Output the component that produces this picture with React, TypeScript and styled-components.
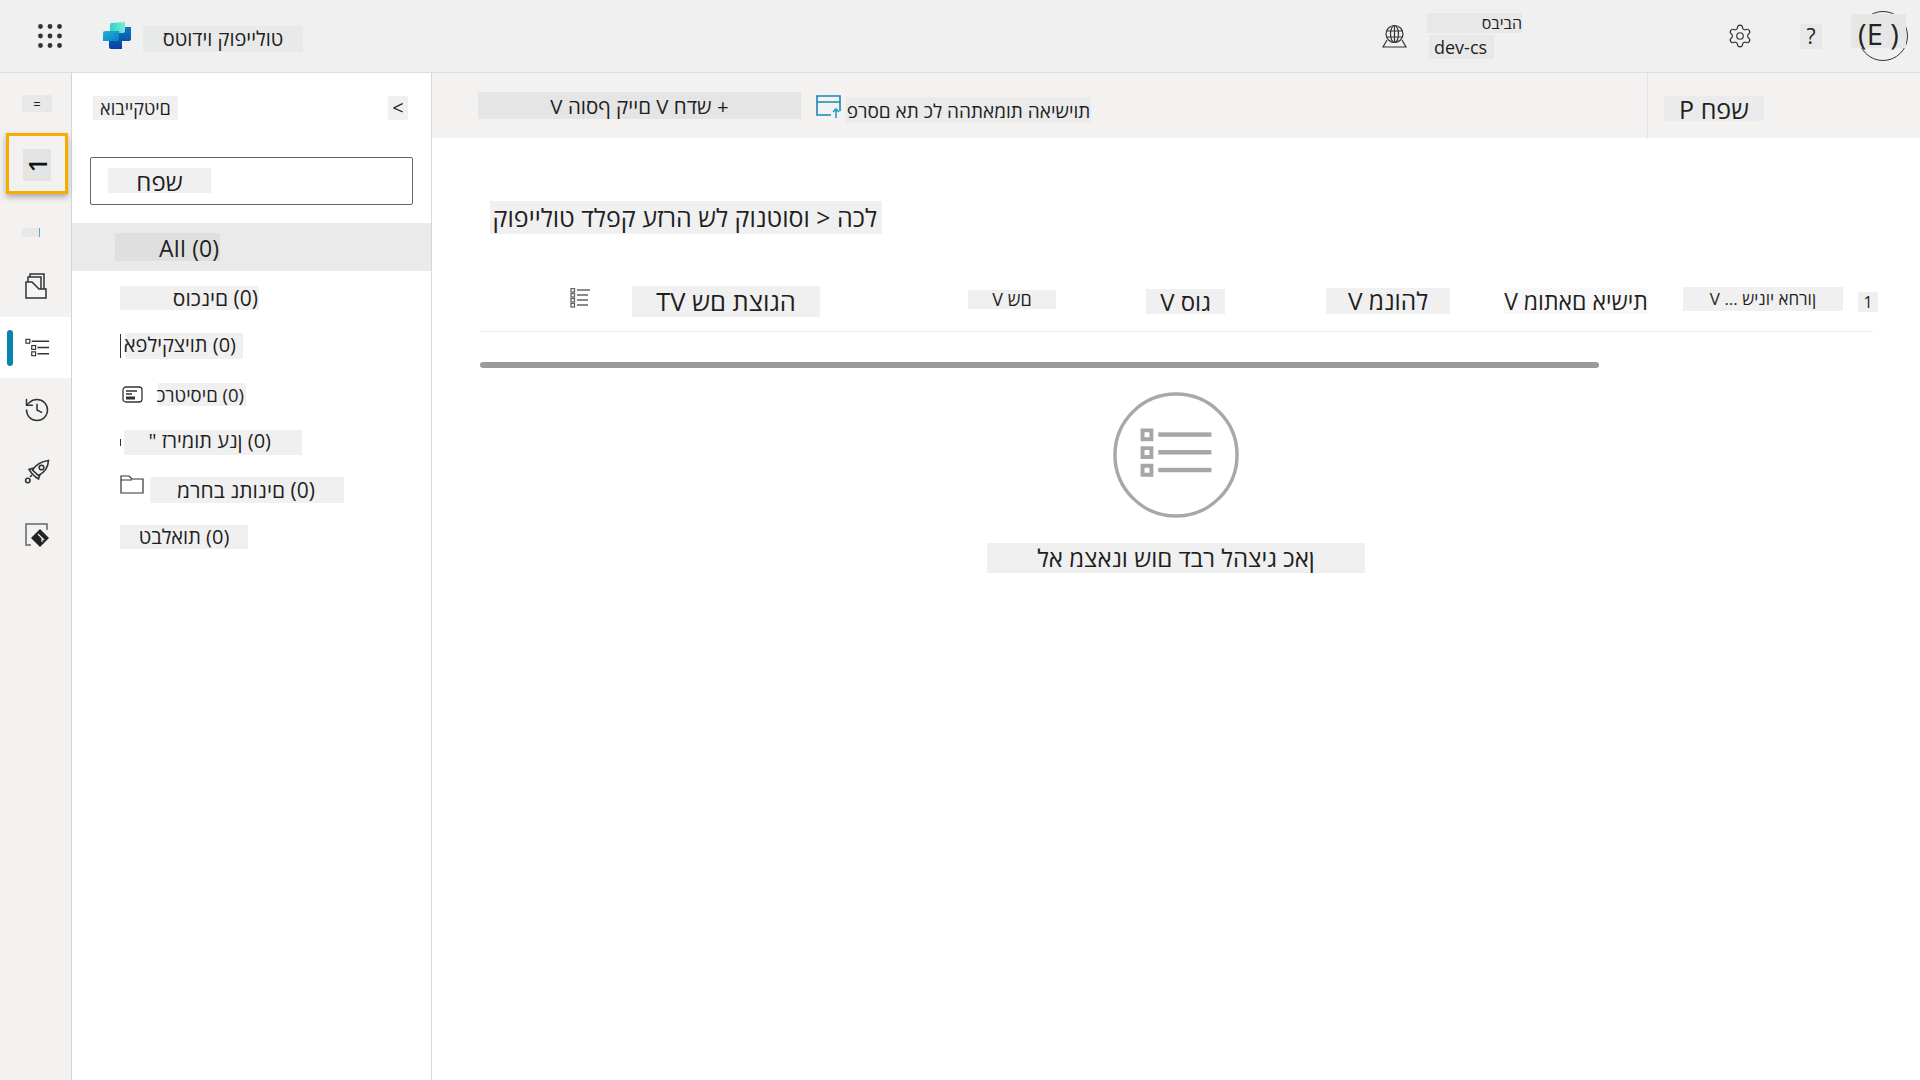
// App.tsx
import React from 'react';
import styled, { createGlobalStyle } from 'styled-components';
import { History, Settings } from 'lucide-react';

const GlobalStyle = createGlobalStyle`
  html, body {
    margin: 0;
    padding: 0;
    background: #fff;
  }
  body {
    font-family: "Open Sans", "Noto Sans", "Liberation Sans", sans-serif;
    color: #242424;
  }
`;

const Page = styled.div`
  width: 1920px;
  height: 1080px;
  display: flex;
  flex-direction: column;
  overflow: hidden;
`;

const Header = styled.header`
  height: 72px;
  flex: none;
  display: flex;
  align-items: center;
  padding: 0 12px 0 38px;
  background: #f0f0f0;
  border-bottom: 1px solid #dedede;
`;

const Logo = styled.svg`
  width: 30px;
  height: 28px;
  margin-left: 40px;
  margin-right: 11px;
  flex: none;
`;

const Environment = styled.div`
  margin-left: auto;
  display: flex;
  align-items: center;
  gap: 20px;
  margin-right: 205px;
`;

const EnvText = styled.div`
  display: flex;
  flex-direction: column;
  gap: 2px;
  width: 95px;
`;

const HeaderTools = styled.div`
  display: flex;
  align-items: center;
`;

const Avatar = styled.div`
  position: relative;
  width: 50px;
  height: 50px;
  margin-left: 36px;
  border: 1px solid #333;
  border-radius: 50%;
  box-sizing: border-box;
`;

const AvatarLabel = styled.div`
  position: absolute;
  left: -8px;
  top: 2px;
  width: 55px;
  height: 34px;
  background: #e6e6e6;
  font-size: 29px;
  line-height: 39px;
  text-align: center;
  white-space: pre;
`;

const Body = styled.div`
  flex: 1;
  display: flex;
  min-height: 0;
`;

const Rail = styled.nav`
  width: 71px;
  flex: none;
  display: flex;
  flex-direction: column;
  background: #f3f2f1;
  border-right: 1px solid #d4d4d4;
`;

const RailSlot = styled.div<{ $h: number; $active?: boolean; $mt?: number }>`
  position: relative;
  height: ${(p) => p.$h}px;
  margin-top: ${(p) => p.$mt ?? 0}px;
  padding-left: 3px;
  display: flex;
  align-items: center;
  justify-content: center;
  background: ${(p) => (p.$active ? '#fff' : 'transparent')};
`;

const ActiveBar = styled.span`
  position: absolute;
  left: 7px;
  top: 13px;
  width: 6px;
  height: 36px;
  border-radius: 3px;
  background: #0b83ad;
`;

const Highlight = styled.div`
  height: 61px;
  margin: 0 3px 0 6px;
  padding-top: 3px;
  box-sizing: border-box;
  border: 3px solid #f8ab00;
  box-shadow: 0 3px 6px rgba(0, 0, 0, 0.3);
  display: flex;
  align-items: center;
  justify-content: center;
`;

const TurnedGlyph = styled.div`
  width: 28px;
  height: 32px;
  background: #e4e4e4;
  display: flex;
  align-items: center;
  justify-content: center;
  font-size: 25px;
  font-weight: 600;
  color: #111;

  span {
    display: block;
    transform: rotate(-90deg);
  }
`;

const SmudgeMark = styled.div`
  width: 17px;
  height: 9px;
  margin-right: 12px;
  background: #e8e8e8;
  border-right: 1px solid #5aa6d6;
`;

const Panel = styled.aside`
  width: 359px;
  flex: none;
  background: #fff;
  border-right: 1px solid #d8d8d8;
  display: flex;
  flex-direction: column;
`;

const PanelHead = styled.div`
  display: flex;
  align-items: center;
  justify-content: space-between;
  padding: 23px 23px 0 21px;
`;

const SearchBox = styled.div`
  margin: 37px 18px 0 18px;
  height: 48px;
  box-sizing: border-box;
  border: 1px solid #666;
  border-radius: 2px;
  padding: 10px 0 0 17px;
`;

const ObjectList = styled.ul`
  list-style: none;
  margin: 18px 0 0;
  padding: 0;
`;

const ObjectRow = styled.li<{ $selected?: boolean; $pl?: number; $gap?: number }>`
  height: 48px;
  margin-bottom: ${(p) => (p.$selected ? 3 : 0)}px;
  display: flex;
  align-items: center;
  gap: ${(p) => p.$gap ?? 0}px;
  padding-left: ${(p) => p.$pl ?? 48}px;
  background: ${(p) => (p.$selected ? '#ebeaea' : 'transparent')};
`;

const ClipMark = styled.span<{ $h: number }>`
  width: 3px;
  height: ${(p) => p.$h}px;
  flex: none;
  border-left: 1px solid #333;
`;

const RaisedFolder = styled.svg`
  width: 24px;
  height: 19px;
  flex: none;
  margin-bottom: 12px;
`;

const Main = styled.main`
  flex: 1;
  min-width: 0;
  display: flex;
  flex-direction: column;
  background: #fff;
`;

const Toolbar = styled.div`
  height: 65px;
  flex: none;
  display: flex;
  align-items: center;
  background: #f3f2f1;
  padding-left: 46px;
`;

const PublishIcon = styled.svg`
  width: 26px;
  height: 24px;
  margin: 3px 4px 0 15px;
  flex: none;
`;

const SearchCommand = styled.div`
  margin-left: auto;
  width: 273px;
  height: 65px;
  box-sizing: border-box;
  border-left: 1px solid #e2e2e2;
  padding: 23px 0 0 16px;
`;

const Content = styled.div`
  flex: 1;
  padding: 63px 47px 0 48px;
  display: flex;
  flex-direction: column;
`;

const TableHead = styled.div`
  margin-top: 46px;
  height: 43px;
  padding-bottom: 8px;
  display: flex;
  align-items: center;
  border-bottom: 1px solid #ebebeb;
`;

const ColumnIcon = styled.svg`
  width: 20px;
  height: 20px;
  margin: 0 0 8px 90px;
  flex: none;
`;

const Scrollbar = styled.div`
  width: 1119px;
  height: 6px;
  margin-top: 30px;
  border-radius: 3px;
  background: #9a9a9a;
`;

const EmptyState = styled.div`
  margin-top: 24px;
  display: flex;
  flex-direction: column;
  align-items: center;
  width: 1392px;
`;

const EmptyIcon = styled.svg`
  width: 126px;
  height: 126px;
  margin-bottom: 25px;
`;

// text sitting on its grey patch; the patch box is what varies
const Patch = styled.div<{
  $w: number;
  $h: number;
  $size: number;
  $bg?: string;
  $align?: string;
  $pl?: number;
  $pr?: number;
  $ml?: number;
  $mt?: number;
  $mb?: number;
  $dy?: number;
}>`
  width: ${(p) => p.$w}px;
  height: ${(p) => p.$h}px;
  flex: none;
  box-sizing: border-box;
  margin: ${(p) => p.$mt ?? 0}px 0 ${(p) => p.$mb ?? 0}px ${(p) => p.$ml ?? 0}px;
  padding: 0 ${(p) => p.$pr ?? 0}px 0 ${(p) => p.$pl ?? 0}px;
  background: ${(p) => p.$bg ?? '#f0f0f0'};
  font-size: ${(p) => p.$size}px;
  line-height: ${(p) => p.$h + (p.$dy ?? 0) * 2}px;
  text-align: ${(p) => p.$align ?? 'center'};
  white-space: pre;
  color: #1f1f1f;
`;

const Waffle = () => (
  <svg width="24" height="24" viewBox="0 0 24 24" fill="#333">
    {[2.5, 12, 21.5].map((y) =>
      [2.5, 12, 21.5].map((x) => <circle key={`${x}-${y}`} cx={x} cy={y} r="2.4" />),
    )}
  </svg>
);

const CopilotLogo = () => (
  <Logo viewBox="0 0 30 28">
    <defs>
      <linearGradient id="top" x1="0" y1="0" x2="1" y2="0">
        <stop offset="0" stopColor="#2fd3c8" />
        <stop offset="1" stopColor="#7be8d8" />
      </linearGradient>
      <linearGradient id="mid" x1="0" y1="0" x2="1" y2="1">
        <stop offset="0" stopColor="#1fb3d8" />
        <stop offset="1" stopColor="#0a7fc4" />
      </linearGradient>
      <linearGradient id="low" x1="0" y1="0" x2="0" y2="1">
        <stop offset="0" stopColor="#0a78c8" />
        <stop offset="1" stopColor="#0a3f9e" />
      </linearGradient>
    </defs>
    <path d="M16 5 H29 V17 Q29 19 27 19 H20 V27 H9 Q7 27 7 25 V17 Z" fill="url(#low)" />
    <path d="M8 2 Q8 1 10 1 L23 0 V9 Q23 11 20 11 H8 Z" fill="url(#top)" />
    <path d="M1 11 Q1 9 3 9 H17 V17 Q17 19 15 19 L1 19 Z" fill="url(#mid)" />
  </Logo>
);

const GlobeIcon = () => (
  <svg width="25" height="25" viewBox="0 0 25 25" fill="none" stroke="#333" strokeWidth="1.2">
    <circle cx="12.5" cy="10" r="8.5" />
    <ellipse cx="12.5" cy="10" rx="4" ry="8.5" />
    <path d="M4 7 H21 M4 13 H21 M12.5 1.5 V18.5" />
    <path d="M5 16 L1 23 H24 L20 16" />
  </svg>
);

const QuestionPatch = styled(Patch)`
  margin-left: 47px;
`;

const FolderStackIcon = () => (
  <svg width="24" height="26" viewBox="0 0 24 26" fill="none" stroke="#333" strokeWidth="1.5">
    <path d="M1 9 H7 L14 16 H21 V25 H1 Z" fill="#f6f5f4" />
    <path d="M3 9 V4 H16 V16" />
    <path d="M5 4 V1 H19 V16" />
  </svg>
);

const ChecklistIcon = () => (
  <svg width="25" height="20" viewBox="0 0 26 20" fill="none" stroke="#333" strokeWidth="1.2">
    <rect x="1" y="1" width="4" height="4" />
    <rect x="7" y="7.5" width="4" height="4" />
    <rect x="7" y="14" width="4" height="4" />
    <path d="M7 3 H25 M13 9.5 H25 M13 16 H25" strokeWidth="1.5" />
  </svg>
);

const RocketIcon = () => (
  <svg width="26" height="26" viewBox="0 0 26 26" fill="none" stroke="#333" strokeWidth="1.6">
    <path d="M24.5 1.5 C17 2.5 12 5.5 8.5 11 L14.5 16.5 C20.5 13.5 24 9 24.5 1.5 Z" />
    <circle cx="17.5" cy="8.5" r="2.3" />
    <path d="M9.5 9 L5 10.5 L7.5 14 M16 15.5 L14.5 20 L11 17.5 M7.5 14 L11 17.5" />
    <circle cx="3.8" cy="21.5" r="2.2" />
    <path d="M6 18 L8 16" />
  </svg>
);

const RepoIcon = () => (
  <svg width="24" height="24" viewBox="0 0 24 24" fill="none">
    <path d="M6 22 H1 V1 H22 V7" stroke="#666" strokeWidth="1.5" />
    <path d="M15 6 L24 15 L15 24 L6 15 Z" fill="#222" />
    <path d="M13 11 L17 15 V19 M17 15 L19 17" stroke="#f3f2f1" strokeWidth="1.2" />
  </svg>
);

const CardIcon = () => (
  <svg width="21" height="17" viewBox="0 0 21 17" fill="none" stroke="#333" strokeWidth="1.3">
    <rect x="1" y="1" width="19" height="15" rx="3" />
    <path d="M4 5 H15 M4 8 H10" />
    <rect x="4" y="10.5" width="9" height="3" fill="#333" stroke="none" />
  </svg>
);

const App: React.FC = () => (
  <>
    <GlobalStyle />
    <Page>
      <Header>
        <Waffle />
        <CopilotLogo />
        <Patch dir="rtl" $w={160} $h={26} $size={20} $bg="#e8e9e9" $mt={5}>טולייפוק וידוטס</Patch>
        <Environment>
          <GlobeIcon />
          <EnvText>
            <Patch dir="rtl" $w={95} $h={20} $size={16} $bg="#e8e8e8" $align="right">
              הביבס
            </Patch>
            <Patch $w={65} $h={24} $size={18} $bg="#e8e8e8" $ml={2} $pl={5} $align="left">dev-cs</Patch>
          </EnvText>
        </Environment>
        <HeaderTools>
          <Settings size={26} strokeWidth={1.1} color="#333" />
          <QuestionPatch $w={22} $h={25} $size={21} $bg="#e8e8e8">?</QuestionPatch>
          <Avatar>
            <AvatarLabel>(E )</AvatarLabel>
          </Avatar>
        </HeaderTools>
      </Header>
      <Body>
        <Rail>
          <RailSlot $h={60}>
            <Patch $w={30} $h={17} $size={13} $bg="#e8e8e8" $dy={1}>=</Patch>
          </RailSlot>
          <Highlight>
            <TurnedGlyph>
              <span>1</span>
            </TurnedGlyph>
          </Highlight>
          <RailSlot $h={44} $mt={16}>
            <SmudgeMark />
          </RailSlot>
          <RailSlot $h={63}>
            <FolderStackIcon />
          </RailSlot>
          <RailSlot $h={61} $active>
            <ActiveBar />
            <ChecklistIcon />
          </RailSlot>
          <RailSlot $h={63}>
            <History size={28} strokeWidth={1.3} color="#333" />
          </RailSlot>
          <RailSlot $h={62}>
            <RocketIcon />
          </RailSlot>
          <RailSlot $h={64}>
            <RepoIcon />
          </RailSlot>
        </Rail>
        <Panel>
          <PanelHead>
            <Patch dir="rtl" $w={85} $h={24} $size={18}>םיטקייבוא</Patch>
            <Patch $w={20} $h={24} $size={20}>&lt;</Patch>
          </PanelHead>
          <SearchBox>
            <Patch dir="rtl" $w={103} $h={25} $size={24} $dy={1}>שפח</Patch>
          </SearchBox>
          <ObjectList>
            <ObjectRow $selected $pl={43}>
              <Patch $w={105} $h={28} $size={23} $bg="#dfdfdf" $align="right" $pr={1} $dy={1}>AII (0)</Patch>
            </ObjectRow>
            <ObjectRow>
              <Patch dir="rtl" $w={139} $h={24} $size={21} $align="right" $pr={1}>(0) םינכוס</Patch>
            </ObjectRow>
            <ObjectRow $gap={1}>
              <ClipMark $h={24} />
              <Patch dir="rtl" $w={118} $h={26} $size={20} $align="right" $pr={7} $dy={-1}>(0) תויצקילפא</Patch>
            </ObjectRow>
            <ObjectRow $gap={15} $pl={50}>
              <CardIcon />
              <Patch dir="rtl" $w={88} $h={23} $size={18.5} $pr={2}>(0) םיסיטרכ</Patch>
            </ObjectRow>
            <ObjectRow>
              <ClipMark $h={7} />
              <Patch dir="rtl" $w={178} $h={25} $size={20} $align="right" $pr={31} $dy={-2}>(0) ןנע תומירז "</Patch>
            </ObjectRow>
            <ObjectRow $gap={6}>
              <RaisedFolder viewBox="0 0 24 19" fill="none" stroke="#333" strokeWidth="1.2">
                <path d="M1 18 V1 H9 L12 4 H23 V18 Z M1 5 H12" />
              </RaisedFolder>
              <Patch dir="rtl" $w={194} $h={26} $size={21} $pr={2}>(0) םינותנ בחרמ</Patch>
            </ObjectRow>
            <ObjectRow>
              <Patch dir="rtl" $w={128} $h={24} $size={20} $mb={2}>(0) תואלבט</Patch>
            </ObjectRow>
          </ObjectList>
        </Panel>
        <Main>
          <Toolbar>
            <Patch dir="rtl" $w={323} $h={27} $size={20.5} $bg="#e5e5e5" $dy={1}>+ שדח V םייק ףסוה V</Patch>
            <PublishIcon viewBox="0 0 26 24" fill="none" stroke="#1a86b8" strokeWidth="1.6">
              <path d="M15 20 H1 V1 H24 V16 M1 7 H24" />
              <path d="M20 23 V14 M17 17 L20 14 L23 17" stroke="#1aa0d0" />
            </PublishIcon>
            <Patch dir="rtl" $w={245} $h={26} $size={19} $bg="#ebebeb" $mt={8} $dy={1}>תוישיאה תומאתהה לכ תא םסרפ</Patch>
            <SearchCommand>
              <Patch dir="rtl" $w={100} $h={25} $size={25} $bg="#ebebeb" $dy={1}>שפח P</Patch>
            </SearchCommand>
          </Toolbar>
          <Content>
            <Patch dir="rtl" $w={392} $h={33} $size={25} $align="right" $pr={5} $ml={10}>
              לכה &lt; וסוטנוק לש הרזע קפלד טולייפוק
            </Patch>
            <TableHead>
              <ColumnIcon viewBox="0 0 20 20" fill="none" stroke="#666" strokeWidth="1.3">
                <path d="M7 2 H20 M7 7 H18 M7 12 H18 M7 17 H18" />
                <rect x="1" y="0.5" width="3.5" height="3.5" />
                <rect x="1" y="5.5" width="3.5" height="3.5" />
                <rect x="1" y="10.5" width="3.5" height="3.5" />
                <rect x="1" y="15.5" width="3.5" height="3.5" />
              </ColumnIcon>
              <Patch dir="rtl" $ml={42} $w={188} $h={31} $size={25.5}>הגוצת םש TV</Patch>
              <Patch dir="rtl" $ml={148} $w={88} $h={19} $size={18} $mb={4}>םש V</Patch>
              <Patch dir="rtl" $ml={90} $w={79} $h={25} $size={24}>גוס V</Patch>
              <Patch dir="rtl" $ml={101} $w={124} $h={26} $size={24.5} $mb={2}>להונמ V</Patch>
              <Patch dir="rtl" $ml={54} $w={144} $h={26} $size={23} $bg="#f8f8f8" $mb={2}>תישיא םאתומ V</Patch>
              <Patch dir="rtl" $ml={35} $w={160} $h={24} $size={17} $mb={6}>ןורחא יוניש ... V</Patch>
              <Patch $ml={15} $w={20} $h={20} $size={16}>1</Patch>
            </TableHead>
            <Scrollbar />
            <EmptyState>
              <EmptyIcon viewBox="0 0 128 128">
                <circle cx="64" cy="64" r="62" fill="none" stroke="#a8a8a8" strokeWidth="3.5" />
                <g fill="#a6a6a6">
                  <path fillRule="evenodd" d="M28 37 H41 V50 H28 Z M32 41 V46 H37 V41 Z" />
                  <path fillRule="evenodd" d="M28 55 H41 V68 H28 Z M32 59 V64 H37 V59 Z" />
                  <path fillRule="evenodd" d="M28 73 H41 V86 H28 Z M32 77 V82 H37 V77 Z" />
                  <rect x="46" y="41" width="54" height="4.5" />
                  <rect x="46" y="59" width="54" height="4.5" />
                  <rect x="46" y="77" width="54" height="4.5" />
                </g>
              </EmptyIcon>
              <Patch dir="rtl" $w={378} $h={30} $size={24}>ןאכ גיצהל רבד םוש ונאצמ אל</Patch>
            </EmptyState>
          </Content>
        </Main>
      </Body>
    </Page>
  </>
);

export default App;
